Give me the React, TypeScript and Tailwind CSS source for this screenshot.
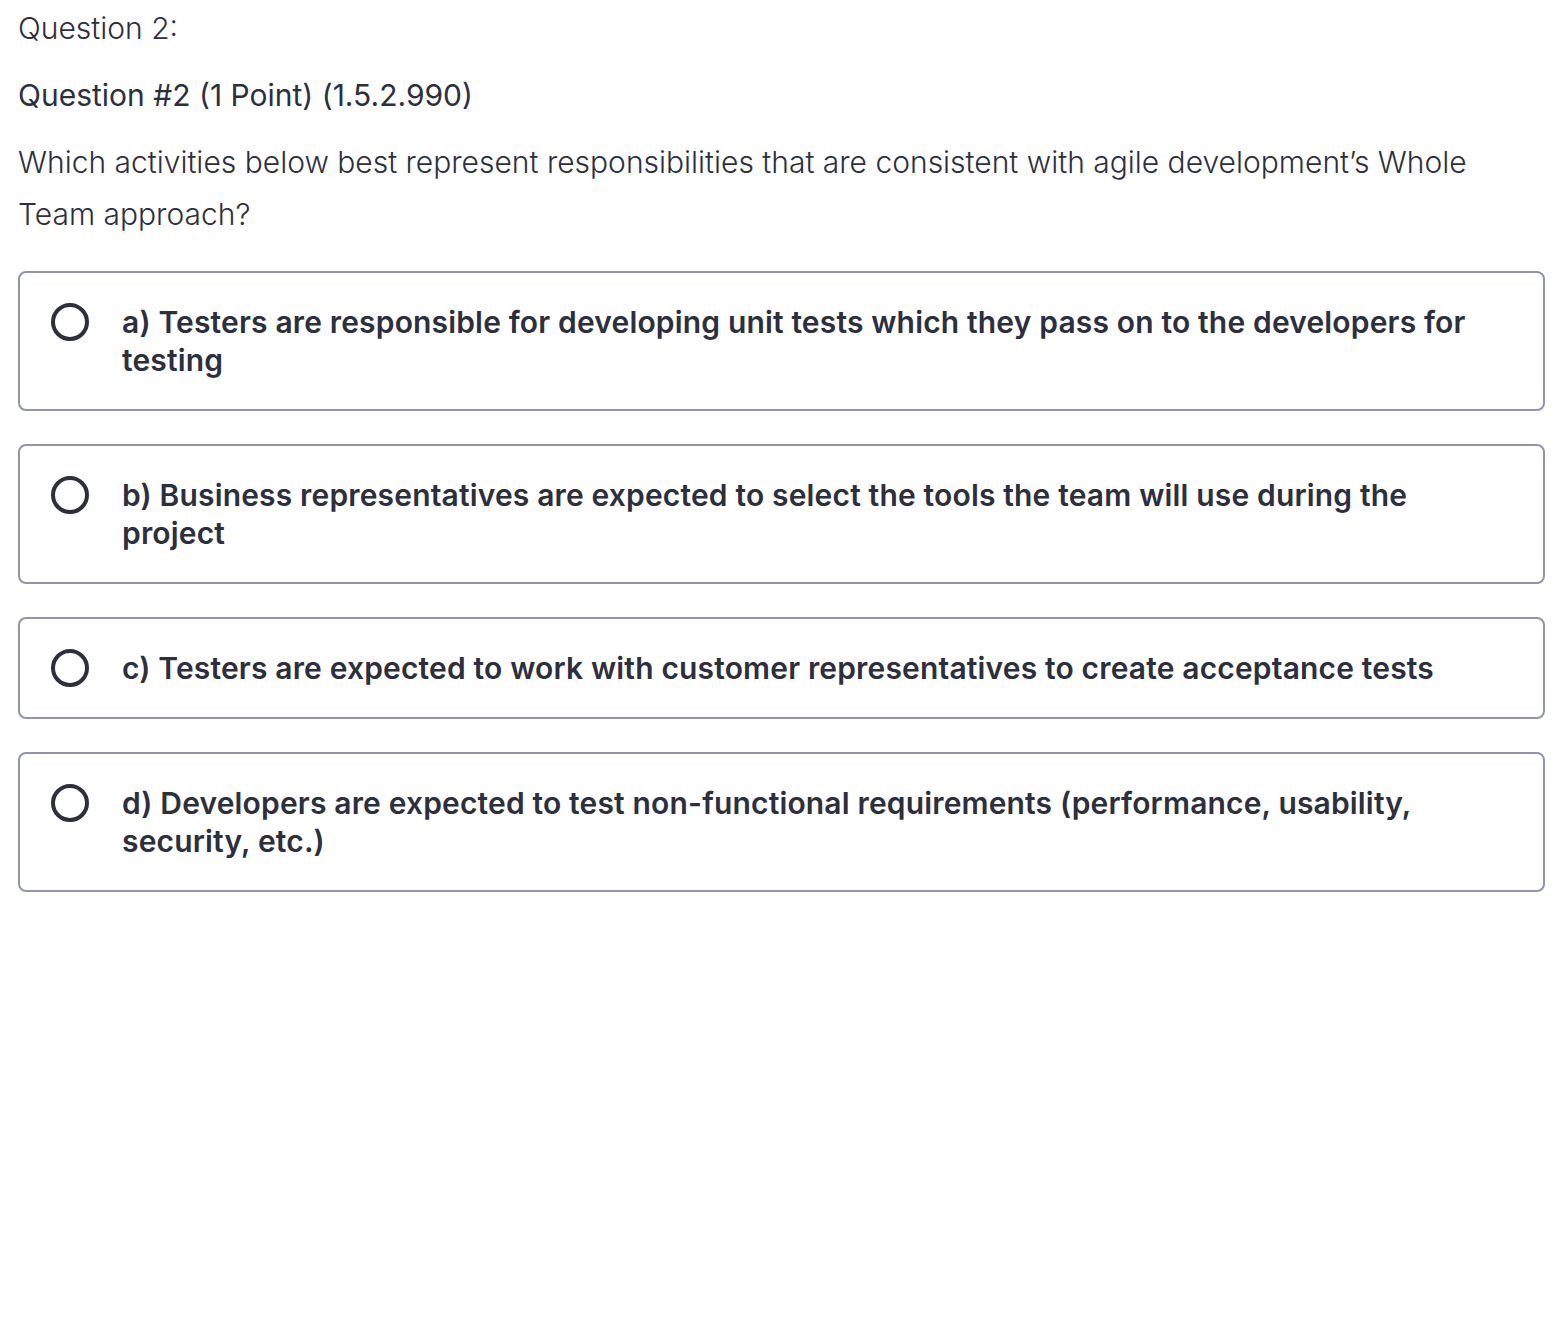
import React from "react"

const options = [
  "a) Testers are responsible for developing unit tests which they pass on to the developers for testing",
  "b) Business representatives are expected to select the tools the team will use during the project",
  "c) Testers are expected to work with customer representatives to create acceptance tests",
  "d) Developers are expected to test non-functional requirements (performance, usability, security, etc.)",
]

export default function App() {
  return (
    <div className="min-h-screen bg-white pl-[18px] pr-[21px] pt-[8px] text-[#2d2f3f] font-['Inter',sans-serif]">
      <p className="text-[30px] leading-[40px] font-light">Question 2:</p>
      <p className="mt-[27px] text-[30px] leading-[40px]">Question #2 (1 Point) (1.5.2.990)</p>
      <p className="mt-[21px] text-[30px] leading-[52px] font-light">
        Which activities below best represent responsibilities that are consistent with agile development’s Whole Team approach?
      </p>

      <div className="mt-[31px] flex flex-col gap-[33px]">
        {options.map((text) => (
          <label
            key={text}
            className="flex items-start gap-[33px] rounded-[8px] border-2 border-[#9194ac] bg-white pl-[31px] pr-[64px] py-[30px]"
          >
            <span className="h-[38px] w-[38px] shrink-0 rounded-full border-4 border-[#2d2f3f]" />
            <span className="text-[30px] leading-[38px] font-semibold tracking-[0.16px]">{text}</span>
          </label>
        ))}
      </div>
    </div>
  )
}
